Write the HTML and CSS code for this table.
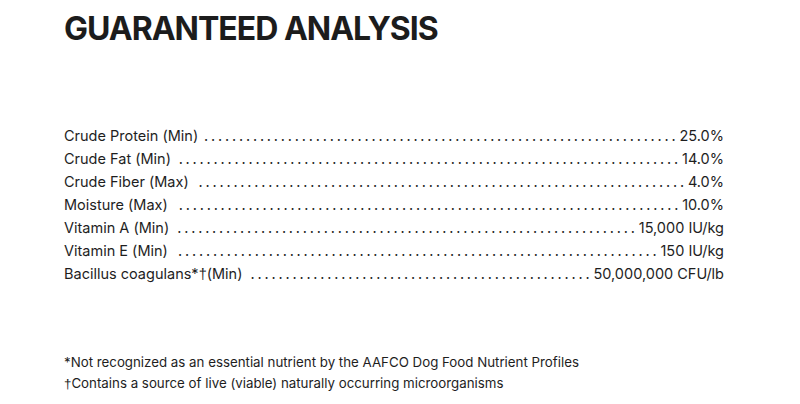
FILE: index.html
```html
<!DOCTYPE html>
<html lang="en">
<head>
    <meta charset="UTF-8">
    <meta name="viewport" content="width=device-width, initial-scale=1.0">
    <title>Guaranteed Analysis</title>
    <link rel="stylesheet" href="styles.css">
</head>
<body>
    <section class="analysis">
        <h1 class="title">GUARANTEED ANALYSIS</h1>

        <ul class="rows">
            <li class="row"><span class="label">Crude Protein (Min)</span><span class="dots"></span><span class="value">25.0%</span></li>
            <li class="row"><span class="label">Crude Fat (Min)</span><span class="dots"></span><span class="value">14.0%</span></li>
            <li class="row"><span class="label">Crude Fiber (Max)</span><span class="dots"></span><span class="value">4.0%</span></li>
            <li class="row"><span class="label">Moisture (Max)</span><span class="dots"></span><span class="value">10.0%</span></li>
            <li class="row"><span class="label">Vitamin A (Min)</span><span class="dots"></span><span class="value">15,000 IU/kg</span></li>
            <li class="row"><span class="label">Vitamin E (Min)</span><span class="dots"></span><span class="value">150 IU/kg</span></li>
            <li class="row"><span class="label">Bacillus coagulans*<span class="mark">†</span>(Min)</span><span class="dots"></span><span class="value">50,000,000 CFU/lb</span></li>
        </ul>

        <div class="notes">
            <p>*Not recognized as an essential nutrient by the AAFCO Dog Food Nutrient Profiles</p>
            <p><span class="mark">†</span>Contains a source of live (viable) naturally occurring microorganisms</p>
        </div>
    </section>

    <script>
        // put as many dots in each leader as fit in its width
        document.querySelectorAll(".dots").forEach(d => {
            const probe = document.createElement("span");
            probe.textContent = ".";
            d.appendChild(probe);
            const pitch = probe.getBoundingClientRect().width;
            const room = d.clientWidth;
            d.textContent = ".".repeat(Math.max(0, Math.floor(room / pitch)));
        });
    </script>
</body>
</html>
```

FILE: styles.css
```css
* {
    margin: 0;
    padding: 0;
    box-sizing: border-box;
}
body {
    background-color: #ffffff;
    color: #1e1e1e;
    font-family: "Inter", "Liberation Sans", sans-serif;
}
.analysis {
    padding: 9px 76px 0 64px;
}
.title {
    font-size: 32px;
    font-weight: 700;
    letter-spacing: -1px;
    line-height: 40px;
    color: #1c1c1c;
}
.rows {
    list-style: none;
    margin-top: 75px;
}
.row {
    display: flex;
    align-items: baseline;
    font-size: 14.5px;
    line-height: 23px;
}
.label,
.value {
    white-space: nowrap;
}
.mark {
    font-family: "Liberation Sans", sans-serif;
}
/* dotted leader between name and amount */
.dots {
    flex: 1;
    min-width: 0;
    margin: 0 1px 0 5px;
    white-space: nowrap;
    overflow: hidden;
    text-align: right;
    letter-spacing: 2.8px;
}
.notes {
    margin-top: 66px;
    font-size: 13.3px;
    line-height: 21px;
}
```
